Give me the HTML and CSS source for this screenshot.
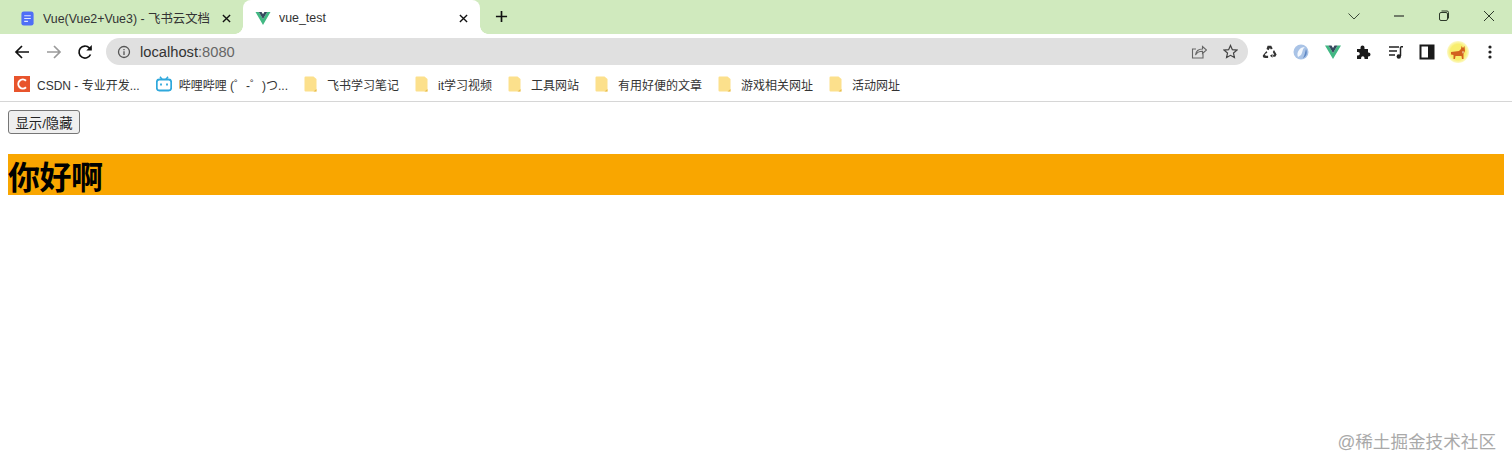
FILE: index.html
```html
<!DOCTYPE html>
<html lang="zh">
<head>
  <meta charset="UTF-8">
  <title>vue_test</title>
  <link rel="stylesheet" href="styles.css">
</head>
<body>

  <div class="tabstrip">
    <div class="tab">
      <svg class="tab-icon" viewBox="0 0 16 16"><rect x="1.5" y="0.5" width="13" height="15" rx="2.5" fill="#4f6ef7"/><path d="M4.5 5h7M4.5 8h7M4.5 11h4" stroke="#dfe6ff" stroke-width="1.2"/></svg>
      <span class="tab-title">Vue(Vue2+Vue3) - 飞书云文档</span>
      <svg class="tab-close" viewBox="0 0 10 10"><path d="M1 1l8 8M9 1l-8 8" stroke="#111" stroke-width="1.5"/></svg>
    </div>
    <div class="tab tab-active">
      <svg class="tab-icon" viewBox="0 0 16 16"><path d="M0 1h3.500L8 8.500 12.500 1H16L8 15z" fill="#42b883"/><path d="M3.500 1h3L8 3.500 9.500 1h3L8 8.500z" fill="#35495e"/></svg>
      <span class="tab-title">vue_test</span>
      <svg class="tab-close" viewBox="0 0 10 10"><path d="M1 1l8 8M9 1l-8 8" stroke="#111" stroke-width="1.5"/></svg>
    </div>
    <svg class="new-tab" viewBox="0 0 14 14"><path d="M7 1v12M1 7h12" stroke="#111" stroke-width="1.8"/></svg>
    <div class="win-controls">
      <svg viewBox="0 0 12 12"><path d="M0.500 3.500l5.500 5.500 5.500-5.500" fill="none" stroke="#3c4a38"/></svg>
      <svg viewBox="0 0 12 12"><path d="M1 6h10" stroke="#222" stroke-width="1.100"/></svg>
      <svg viewBox="0 0 12 12"><rect x="1.500" y="2.500" width="8" height="8" rx="1.500" fill="none" stroke="#2d3a2a"/><path d="M3.500 1h5.500a1.500 1.500 0 0 1 1.500 1.500v6" fill="none" stroke="#2d3a2a"/></svg>
      <svg viewBox="0 0 12 12"><path d="M1 1l10 10M11 1L1 11" stroke="#2d3a2a"/></svg>
    </div>
  </div>

  <div class="toolbar">
    <div class="nav-btns">
      <svg viewBox="0 0 16 16"><path d="M15 8H2M8 2L2 8l6 6" fill="none" stroke="#111" stroke-width="1.700"/></svg>
      <svg viewBox="0 0 16 16"><path d="M1 8h13M8 2l6 6-6 6" fill="none" stroke="#9a9a9a" stroke-width="1.700"/></svg>
      <svg viewBox="0 0 16 16"><path d="M13.500 10.500A6 6 0 1 1 12.300 3.800L14 5.500" fill="none" stroke="#111" stroke-width="1.700"/><path d="M14.800 1v5.500H9.300z" fill="#111"/></svg>
    </div>
    <div class="omnibox">
      <svg class="info-icon" viewBox="0 0 14 14"><circle cx="7" cy="7" r="5.500" fill="none" stroke="#555" stroke-width="1.300"/><path d="M7 6.300v3.700M7 4v1.300" stroke="#555" stroke-width="1.300"/></svg>
      <span class="url">localhost<span class="url-port">:8080</span></span>
      <svg class="omni-share" viewBox="0 0 16 16"><path d="M12 9.500V14H1.500V5H5" fill="none" stroke="#666" stroke-width="1.100"/><path d="M4.500 11c.5-4 3-6 7-6V2.500L15.500 6l-4 3.500V7.300c-3 0-5.500 1-7 3.700z" fill="none" stroke="#666" stroke-width="1.100"/></svg>
      <svg class="omni-star" viewBox="0 0 16 16"><path d="M8 1.500l2 4.500 4.800.5-3.600 3.200 1 4.800L8 12.100l-4.200 2.400 1-4.800L1.200 6.500 6 6z" fill="none" stroke="#444" stroke-width="1.300"/></svg>
    </div>
    <div class="ext-icons">
      <svg viewBox="0 0 16 16"><path d="M5.600 1.800h3.600l1.500 2.600-1.800 1-1-1.500-1.400 2.300-2-1.200zM12 6l2.600 4.500-1.300 2.300h-2.200v-2h1.200l-1.500-2.800zM4.400 7l1 1.800-1.900 1-.7 1.300 1.300.7h2v2.100H3l-2-.6-.2-1.700z" fill="#333"/><path d="M8 11.800l2.500-1.800v3.800z" fill="#333"/></svg>
      <svg viewBox="0 0 16 16"><circle cx="8" cy="8" r="7.500" fill="#a9c3e6"/><path d="M5 13C3 8 7 3 12 3c-3 2-2 5-4 8z" fill="#f4f8fd"/><path d="M10 14c3-1 5-5 3-9-1 3-1 6-3 9z" fill="#5f88c4"/></svg>
      <svg viewBox="0 0 16 16"><path d="M0 1.500h3.500L8 9 12.500 1.500H16L8 15z" fill="#42b883"/><path d="M3.500 1.500h3L8 4 9.500 1.500h3L8 9z" fill="#35495e"/></svg>
      <svg viewBox="0 0 16 16"><path d="M1 5h3.500V3.500a2 2 0 0 1 4 0V5H12v3.500h.500a2 2 0 0 1 0 4H12V15H8.500v-1a1.700 1.700 0 0 0-3.400 0v1H1v-3.500h1a1.800 1.800 0 0 0 0-3.600H1z" fill="#1a1a1a"/></svg>
      <svg viewBox="0 0 16 16"><path d="M1 3h10M1 7h8M1 11h6" stroke="#222" stroke-width="1.500"/><path d="M12.500 3v9" stroke="#222" stroke-width="1.500"/><path d="M12.500 2h2.500v1.500h-2.500z" fill="#222"/><circle cx="10.800" cy="12.500" r="2.200" fill="#222"/></svg>
      <svg viewBox="0 0 16 16"><rect x="1.500" y="1.500" width="13" height="13" fill="none" stroke="#1a1a1a" stroke-width="2"/><rect x="9" y="1.500" width="5.500" height="13" fill="#1a1a1a"/></svg>
      <svg class="avatar" viewBox="0 0 22 22">
        <defs><radialGradient id="glow"><stop offset="0.7" stop-color="#f8ee6e"/><stop offset="1" stop-color="#fdf9c8"/></radialGradient></defs>
        <circle cx="11" cy="11" r="11" fill="url(#glow)"/>
        <path d="M4 11l8-1 2-2 .5-3 1.500 2 1.500-2 .5 5-1.500 3v5H15l-.500-3H8.500L8 18H6.500v-4L4 13.500z" fill="#d2611f"/>
        <path d="M15 10.500h2l-1 2.500z" fill="#f6e0b8"/>
      </svg>
      <svg viewBox="0 0 16 16"><circle cx="8" cy="3" r="1.600" fill="#222"/><circle cx="8" cy="8" r="1.600" fill="#222"/><circle cx="8" cy="13" r="1.600" fill="#222"/></svg>
    </div>
  </div>

  <div class="bookmarks">
    <div class="bm bm-site">
      <svg viewBox="0 0 16 16"><rect width="16" height="16" fill="#e8542c"/><path d="M12 4.800A4.500 4.500 0 1 0 12 11.200" fill="none" stroke="#fff" stroke-width="2"/></svg>
      <span>CSDN - 专业开发...</span>
    </div>
    <div class="bm bm-site">
      <svg viewBox="0 0 16 16"><rect x="0.800" y="3.500" width="14.400" height="11" rx="2.500" fill="none" stroke="#2fa8dc" stroke-width="1.800"/><path d="M4 0.800l2.200 2.700M12 0.800L9.800 3.500" stroke="#2fa8dc" stroke-width="1.500"/><path d="M5 7.500v2M11 7.500v2" stroke="#2fa8dc" stroke-width="1.800"/></svg>
      <span>哔哩哔哩 (゜-゜)つ...</span>
    </div>
    <div class="bm"><svg class="folder" viewBox="0 0 13 16"><path d="M1.500 0.500h8L12.500 3v12.500h-11a1 1 0 0 1-1-1v-13a1 1 0 0 1 1-1z" fill="#fce08c"/><path d="M9.500 15.500l3-2.500v2.500z" fill="#e8bd4d"/></svg><span>飞书学习笔记</span></div>
    <div class="bm"><svg class="folder" viewBox="0 0 13 16"><path d="M1.500 0.500h8L12.500 3v12.500h-11a1 1 0 0 1-1-1v-13a1 1 0 0 1 1-1z" fill="#fce08c"/><path d="M9.500 15.500l3-2.500v2.500z" fill="#e8bd4d"/></svg><span>it学习视频</span></div>
    <div class="bm"><svg class="folder" viewBox="0 0 13 16"><path d="M1.500 0.500h8L12.500 3v12.500h-11a1 1 0 0 1-1-1v-13a1 1 0 0 1 1-1z" fill="#fce08c"/><path d="M9.500 15.500l3-2.500v2.500z" fill="#e8bd4d"/></svg><span>工具网站</span></div>
    <div class="bm"><svg class="folder" viewBox="0 0 13 16"><path d="M1.500 0.500h8L12.500 3v12.500h-11a1 1 0 0 1-1-1v-13a1 1 0 0 1 1-1z" fill="#fce08c"/><path d="M9.500 15.500l3-2.500v2.500z" fill="#e8bd4d"/></svg><span>有用好便的文章</span></div>
    <div class="bm"><svg class="folder" viewBox="0 0 13 16"><path d="M1.500 0.500h8L12.500 3v12.500h-11a1 1 0 0 1-1-1v-13a1 1 0 0 1 1-1z" fill="#fce08c"/><path d="M9.500 15.500l3-2.500v2.500z" fill="#e8bd4d"/></svg><span>游戏相关网址</span></div>
    <div class="bm"><svg class="folder" viewBox="0 0 13 16"><path d="M1.500 0.500h8L12.500 3v12.500h-11a1 1 0 0 1-1-1v-13a1 1 0 0 1 1-1z" fill="#fce08c"/><path d="M9.500 15.500l3-2.500v2.500z" fill="#e8bd4d"/></svg><span>活动网址</span></div>
  </div>

  <div class="page">
    <button class="toggle">显示/隐藏</button>
    <h1 class="hello">你好啊</h1>
  </div>

  <div class="watermark">@稀土掘金技术社区</div>

</body>
</html>
```

FILE: styles.css
```css
* {
  box-sizing: border-box;
}

html, body {
  height: 100%;
}

body {
  margin: 0;
  position: relative;
  overflow: hidden;
  background: #fff;
  color: #222;
  font-family: "Liberation Sans", "Noto Sans CJK SC", sans-serif;
}

svg {
  display: block;
  flex: none;
}

/* tab strip */
.tabstrip {
  display: flex;
  align-items: stretch;
  height: 34px;
  padding-left: 8px;
  background: #d0eabe;
}

.tab {
  display: flex;
  align-items: center;
  width: 235px;
  padding: 2px 10px 0 12px;
  font-size: 12.4px;
  color: #333;
}

.tab-active {
  position: relative;
  width: 237px;
  padding-left: 12px;
  background: #fff;
  border-radius: 8px 8px 0 0;
}

/* little flares where the active tab meets the toolbar */
.tab-active::before,
.tab-active::after {
  content: "";
  position: absolute;
  bottom: 0;
  width: 8px;
  height: 8px;
}

.tab-active::before {
  left: -8px;
  background: radial-gradient(circle at 0 0, #d0eabe 7.500px, #fff 8px);
}

.tab-active::after {
  right: -8px;
  background: radial-gradient(circle at 100% 0, #d0eabe 7.500px, #fff 8px);
}

.tab-icon {
  width: 15px;
  height: 15px;
  margin-right: 8px;
}

.tab-active .tab-icon {
  width: 16px;
  margin-right: 8px;
}

.tab-title {
  flex: 1;
  white-space: nowrap;
  overflow: hidden;
}

.tab-close {
  width: 9px;
  height: 9px;
  margin-right: 2px;
}

.new-tab {
  width: 13px;
  height: 13px;
  margin: 10px 0 0 15px;
}

.win-controls {
  display: flex;
  align-items: center;
  gap: 33px;
  margin-left: auto;
  padding: 0 17px 3px 0;
}

.win-controls svg {
  width: 12px;
  height: 12px;
}

/* address bar */
.toolbar {
  display: flex;
  align-items: center;
  height: 35px;
  padding-left: 14px;
}

.nav-btns {
  display: flex;
  gap: 15.500px;
  width: 92px;
}

.nav-btns svg {
  width: 16px;
  height: 16px;
}

.omnibox {
  display: flex;
  align-items: center;
  width: 1142px;
  height: 27px;
  padding: 0 10px 0 11px;
  background: #e0e0e0;
  border-radius: 14px;
}

.info-icon {
  width: 14px;
  height: 14px;
  margin-right: 9px;
}

.url {
  flex: 1;
  font-size: 14.700px;
  color: #333;
}

.url-port {
  color: #666;
}

.omni-share {
  width: 16px;
  height: 16px;
  margin-right: 16px;
}

.omni-star {
  width: 15px;
  height: 15px;
}

.ext-icons {
  display: flex;
  align-items: center;
  gap: 15.400px;
  margin-left: 14px;
}

.ext-icons svg {
  width: 16px;
  height: 16px;
}

.ext-icons .avatar {
  width: 22px;
  height: 22px;
  margin: 0 -3px;
}

/* bookmarks bar */
.bookmarks {
  display: flex;
  align-items: center;
  gap: 16px;
  height: 33px;
  padding: 0 0 2px 14px;
  border-bottom: 1px solid #d6d6d6;
  font-size: 12px;
  color: #333;
}

.bm {
  display: flex;
  align-items: center;
  gap: 10px;
  white-space: nowrap;
}

.bm svg {
  width: 16px;
  height: 16px;
}

.bm-site {
  gap: 7px;
}

.bm .folder {
  width: 13px;
}

/* page content */
.page {
  padding: 8px;
}

.toggle {
  display: block;
  width: 72px;
  height: 24px;
  padding: 0;
  border: 1px solid #767676;
  border-radius: 3px;
  background: #efefef;
  color: #222;
  font-size: 13.330px;
  font-family: "Liberation Sans", "Noto Sans CJK SC", sans-serif;
}

.hello {
  margin: 20px 0 0;
  height: 41px;
  background: #f9a600;
  color: #000;
  font-size: 32px;
  letter-spacing: -0.500px;
  line-height: 43px;
  font-weight: bold;
  font-family: "Noto Sans CJK SC", sans-serif;
}

.watermark {
  position: absolute;
  right: 16px;
  bottom: 14px;
  font-size: 17.600px;
  color: #9b9b9b;
  opacity: .85;
}
```
